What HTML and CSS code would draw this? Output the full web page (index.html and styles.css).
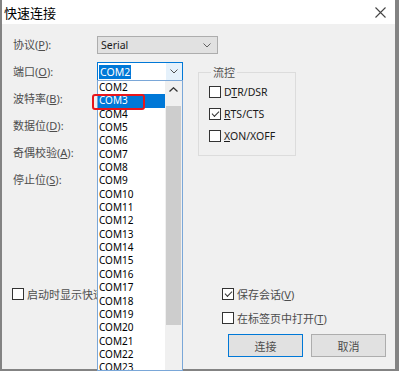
FILE: index.html
```html
<!DOCTYPE html>
<html lang="zh-CN">
<head>
    <meta charset="UTF-8">
    <title>快速连接</title>
    <link rel="stylesheet" href="styles.css">
</head>
<body>
    <div class="window">
        <div class="titlebar">
            <span class="title">快速连接</span>
            <svg class="close" width="11" height="11" viewBox="0 0 11 11">
                <path d="M0.5 0.5 L10.5 10.5 M10.5 0.5 L0.5 10.5" stroke="#444" stroke-width="1.1" fill="none"/>
            </svg>
        </div>

        <div class="content">
            <div class="form">
                <span class="lbl">协议(<u>P</u>):</span>
                <div class="combo combo-proto">
                    <span>Serial</span>
                    <svg class="chev" width="8" height="5" viewBox="0 0 8 5"><path d="M0.5 0.5 L4 4 L7.5 0.5" stroke="#606060" fill="none"/></svg>
                </div>

                <span class="lbl">端口(<u>O</u>):</span>
                <div class="port">
                    <div class="combo combo-port">
                        <span class="sel">COM2</span>
                        <span class="drop-btn">
                            <svg width="8" height="5" viewBox="0 0 8 5"><path d="M0.5 0.5 L4 4 L7.5 0.5" stroke="#505050" fill="none"/></svg>
                        </span>
                    </div>
                    <div class="list">
                        <div class="items" id="items"></div>
                        <div class="scrollbar">
                            <div class="arrow-up">
                                <svg width="9" height="5" viewBox="0 0 9 5"><path d="M0.5 4.5 L4.5 0.8 L8.5 4.5" stroke="#333" stroke-width="1.3" fill="none"/></svg>
                            </div>
                            <div class="thumb"></div>
                        </div>
                    </div>
                    <div class="mark"></div>
                </div>

                <fieldset class="flow">
                    <legend>流控</legend>
                    <div class="check-row"><span class="cb"></span><span class="en">D<u>T</u>R/DSR</span></div>
                    <div class="check-row"><span class="cb checked"></span><span class="en"><u>R</u>TS/CTS</span></div>
                    <div class="check-row"><span class="cb"></span><span class="en"><u>X</u>ON/XOFF</span></div>
                </fieldset>

                <span class="lbl">波特率(<u>B</u>):</span>
                <span class="lbl">数据位(<u>D</u>):</span>
                <span class="lbl">奇偶校验(<u>A</u>):</span>
                <span class="lbl">停止位(<u>S</u>):</span>
            </div>

            <div class="bottom">
                <div class="check-row startup"><span class="cb"></span><span class="cn">启动时显示快速连接</span></div>
                <div class="right-col">
                    <div class="check-row"><span class="cb checked"></span><span class="cn">保存会话(<u>V</u>)</span></div>
                    <div class="check-row"><span class="cb"></span><span class="cn">在标签页中打开(<u>T</u>)</span></div>
                    <div class="buttons">
                        <button class="btn default">连接</button>
                        <button class="btn">取消</button>
                    </div>
                </div>
            </div>
        </div>
    </div>

    <script>
        // fill the port dropdown (the list runs past the bottom of the window)
        const items = document.getElementById('items');
        for (let i = 2; i <= 23; i++) {
            const div = document.createElement('div');
            div.className = 'item' + (i === 3 ? ' active' : '');
            div.textContent = 'COM' + i;
            items.appendChild(div);
        }
    </script>
</body>
</html>
```

FILE: styles.css
```css
html, body {
    margin: 0;
    padding: 0;
    overflow: hidden;
}
body {
    width: 399px;
    height: 371px;
    background-color: #838383;
    font-family: "Noto Sans", "Noto Sans CJK SC", sans-serif;
    font-size: 10.5px;
    color: #1a1a1a;
}
.window {
    margin-left: 2px;
    width: 393px;
    height: 369px;
    background: #f0f0f0;
}
.titlebar {
    height: 24px;
    background: white;
    display: flex;
    align-items: center;
    justify-content: space-between;
    padding: 0 9px 0 2px;
}
.title {
    font-family: "Noto Sans CJK SC", sans-serif;
    font-size: 13px;
    color: #000;
}
.content {
    height: 345px;
    box-sizing: border-box;
    padding: 12px 9px 12px 11px;
    display: flex;
    flex-direction: column;
}
.form {
    display: grid;
    grid-template-columns: 84px 101px 98px;
    grid-auto-rows: 18px;
    row-gap: 9px;
}
.lbl {
    grid-column: 1;
    font-size: 11px;
    line-height: 18px;
    color: #4d4d4d;
}
.combo {
    box-sizing: border-box;
    height: 18px;
    display: flex;
    align-items: center;
    justify-content: space-between;
}
.combo-proto {
    grid-column: 2 / 4;
    width: 121px;
    background: #e1e1e1;
    border: 1px solid #adadad;
    padding: 0 6px 0 3px;
    color: #1a1a1a;
}
.port {
    grid-column: 2;
    position: relative;
}
.combo-port {
    width: 86px;
    height: 19px;
    margin-top: -1px;
    background: white;
    border: 1px solid #0078d7;
    padding-left: 1px;
}
.sel {
    background: #0078d7;
    color: white;
    padding: 0 1px;
    line-height: 14px;
}
.drop-btn {
    width: 16px;
    height: 17px;
    background: #e5f1fb;
    display: flex;
    align-items: center;
    justify-content: center;
}
.list {
    position: absolute;
    left: 0;
    top: 17px;
    width: 86px;
    height: 291px;
    box-sizing: border-box;
    border: 1px solid #7aa7d8;
    background: white;
    display: flex;
    overflow: hidden;
    z-index: 2;
}
.items {
    width: 67px;
}
.item {
    height: 13.35px;
    line-height: 13.35px;
    font-size: 10px;
    padding-left: 1px;
    color: #000;
}
.item.active {
    background: #0078d7;
    color: white;
}
.scrollbar {
    width: 17px;
    background: #f0f0f0;
}
.arrow-up {
    height: 17px;
    display: flex;
    align-items: center;
    justify-content: center;
}
.thumb {
    margin: 8px 1px 0;
    height: 219px;
    background: #cdcdcd;
}
.mark {
    position: absolute;
    left: -5px;
    top: 31px;
    width: 53px;
    height: 16px;
    box-sizing: border-box;
    border: 2px solid #e8161c;
    border-radius: 3px;
    z-index: 3;
}
.flow {
    grid-column: 3;
    grid-row: 2 / 6;
    align-self: start;
    margin: 1px 0 0;
    padding: 3px 0 0 10px;
    width: 98px;
    height: 92px;
    box-sizing: border-box;
    border: 1px solid #dcdcdc;
    display: flex;
    flex-direction: column;
    gap: 4px;
}
.flow legend {
    font-family: "Noto Sans CJK SC", sans-serif;
    font-size: 11px;
    color: #4d4d4d;
    padding: 0 2px;
    margin-left: 2px;
}
.check-row {
    display: flex;
    align-items: center;
    gap: 3px;
    height: 18px;
}
.cb {
    width: 12px;
    height: 12px;
    box-sizing: border-box;
    border: 1px solid #333;
    background: white;
    position: relative;
}
.cb.checked::after {
    content: "";
    position: absolute;
    left: 2px;
    top: 0px;
    width: 6px;
    height: 3px;
    border-left: 1px solid #333;
    border-bottom: 1px solid #333;
    transform: translate(0, 2px) rotate(-45deg);
}
.en {
    color: #1a1a1a;
}
.cn {
    font-size: 11px;
    color: #4d4d4d;
}
.bottom {
    margin-top: auto;
    display: flex;
    justify-content: space-between;
    align-items: flex-start;
}
.startup {
    margin-left: -1px;
}
.right-col {
    width: 164px;
    display: flex;
    flex-direction: column;
    gap: 6px;
}
.buttons {
    display: flex;
    gap: 8px;
    padding-left: 6px;
    margin-top: 1px;
}
.btn {
    width: 75px;
    height: 23px;
    background: #e1e1e1;
    border: 1px solid #adadad;
    font-family: "Noto Sans CJK SC", sans-serif;
    font-size: 11px;
    color: #4d4d4d;
    padding: 0;
}
.btn.default {
    border-color: #0078d7;
}
```
